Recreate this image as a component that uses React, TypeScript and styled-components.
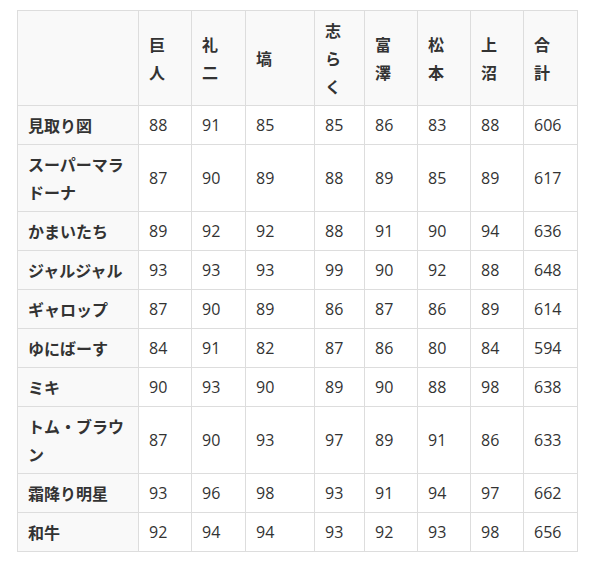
import React from "react";
import styled, { createGlobalStyle } from "styled-components";

const Global = createGlobalStyle`
  html, body { margin: 0; padding: 0; background: #fff; }
  body { font-family: "Open Sans", "Noto Sans CJK JP", sans-serif; color: #333; }
`;

const Wrap = styled.div`
  padding: 10px 15px 0 17px;
`;

const Table = styled.table`
  border-collapse: collapse;
  table-layout: fixed;
  width: 560px;
  font-size: 16px;
  line-height: 28px;
`;

const Th = styled.th`
  border: 1px solid #ddd;
  background: #f9f9f9;
  padding: 5px 10px;
  text-align: left;
  vertical-align: middle;
  font-weight: 700;
  font-family: "Noto Sans CJK JP", sans-serif;
  color: #333;
`;

const Label = styled.span`
  display: block;
  width: 1em;
`;

const RowHead = styled.th`
  border: 1px solid #ddd;
  background: #f9f9f9;
  padding: 5px 10px;
  text-align: left;
  vertical-align: middle;
  font-weight: 700;
  font-family: "Noto Sans CJK JP", sans-serif;
  color: #333;
`;

const Td = styled.td`
  border: 1px solid #ddd;
  background: #fff;
  padding: 5px 10px;
  vertical-align: middle;
  color: #333;
`;

const cols = [
  { label: "", w: 121 },
  { label: "巨人", w: 53 },
  { label: "礼二", w: 54 },
  { label: "塙", w: 69 },
  { label: "志らく", w: 50 },
  { label: "富澤", w: 53 },
  { label: "松本", w: 53 },
  { label: "上沼", w: 53 },
  { label: "合計", w: 54 },
];

const rows: [string, number[]][] = [
  ["見取り図", [88, 91, 85, 85, 86, 83, 88, 606]],
  ["スーパーマラドーナ", [87, 90, 89, 88, 89, 85, 89, 617]],
  ["かまいたち", [89, 92, 92, 88, 91, 90, 94, 636]],
  ["ジャルジャル", [93, 93, 93, 99, 90, 92, 88, 648]],
  ["ギャロップ", [87, 90, 89, 86, 87, 86, 89, 614]],
  ["ゆにばーす", [84, 91, 82, 87, 86, 80, 84, 594]],
  ["ミキ", [90, 93, 90, 89, 90, 88, 98, 638]],
  ["トム・ブラウン", [87, 90, 93, 97, 89, 91, 86, 633]],
  ["霜降り明星", [93, 96, 98, 93, 91, 94, 97, 662]],
  ["和牛", [92, 94, 94, 93, 92, 93, 98, 656]],
];

export default function App() {
  return (
    <>
      <Global />
      <Wrap>
        <Table>
          <colgroup>
            {cols.map((c, i) => (
              <col key={i} style={{ width: c.w }} />
            ))}
          </colgroup>
          <thead>
            <tr>
              {cols.map((c, i) => (
                <Th key={i}>{c.label && <Label>{c.label}</Label>}</Th>
              ))}
            </tr>
          </thead>
          <tbody>
            {rows.map(([name, scores]) => (
              <tr key={name}>
                <RowHead>{name}</RowHead>
                {scores.map((s, i) => (
                  <Td key={i}>{s}</Td>
                ))}
              </tr>
            ))}
          </tbody>
        </Table>
      </Wrap>
    </>
  );
}
